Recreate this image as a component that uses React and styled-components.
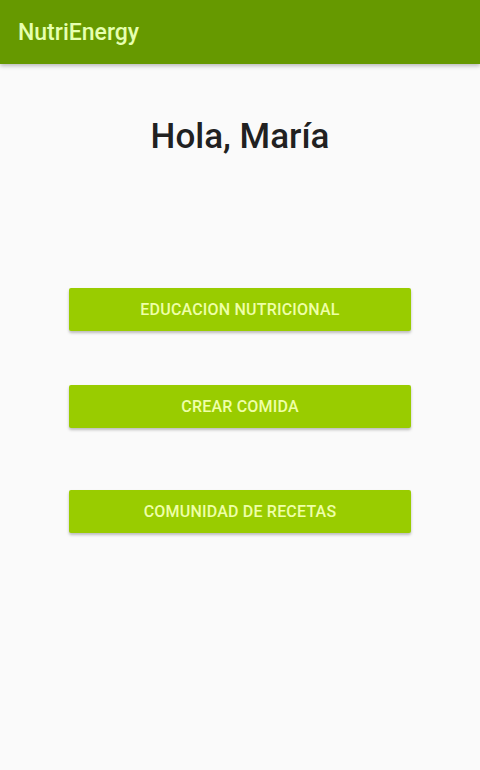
import React from 'react'
import styled, { createGlobalStyle } from 'styled-components'

const GlobalStyle = createGlobalStyle`
body{
margin:0;
background:#fafafa;
font-family:Roboto, "Liberation Sans", sans-serif;
}
`

const Screen = styled.div`
width:480px;
height:770px;
display:flex;
flex-direction:column;
background:#fafafa;
overflow:hidden;
`

const Toolbar = styled.header`
height:64px;
flex-shrink:0;
background:#669900;
display:flex;
align-items:center;
padding:0 18px;
box-shadow:0 2px 4px rgba(0,0,0,0.25);
`

const Title = styled.h1`
margin:0;
font-size:23px;
font-weight:500;
color:#e6ffb0;
`

const Greeting = styled.h2`
margin:52px 0 0;
text-align:center;
font-size:35px;
font-weight:500;
color:#212121;
line-height:42px;
`

const Menu = styled.div`
display:flex;
flex-direction:column;
align-items:center;
margin-top:130px;
`

const MenuButton = styled.button`
width:342px;
height:43px;
margin-top:${(p) => p.$gap}px;
background:#99cc00;
border:none;
border-radius:2px;
box-shadow:0 2px 3px rgba(0,0,0,0.25);
color:#eeffa8;
font-family:Roboto, "Liberation Sans", sans-serif;
font-size:16px;
font-weight:500;
letter-spacing:0.2px;
text-transform:uppercase;
`

const App = () => {
  return (
    <>
      <GlobalStyle />
      <Screen>
        <Toolbar>
          <Title>NutriEnergy</Title>
        </Toolbar>
        <Greeting>Hola, María</Greeting>
        <Menu>
          <MenuButton $gap={0}>Educacion Nutricional</MenuButton>
          <MenuButton $gap={54}>Crear Comida</MenuButton>
          <MenuButton $gap={62}>Comunidad de Recetas</MenuButton>
        </Menu>
      </Screen>
    </>
  )
}

export default App
